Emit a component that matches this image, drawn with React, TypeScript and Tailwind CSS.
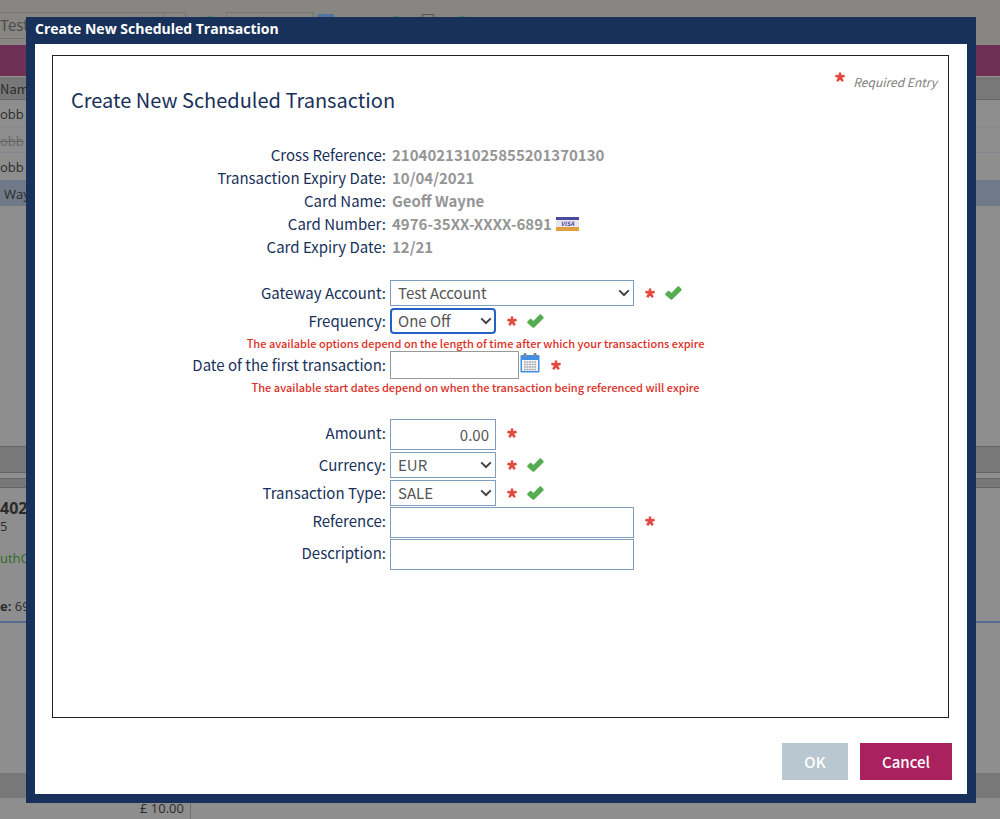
import { useState } from "react";
import type { ReactNode } from "react";
import clsx from "clsx";

const details = [
  { label: "Cross Reference:", value: "210402131025855201370130" },
  { label: "Transaction Expiry Date:", value: "10/04/2021" },
  { label: "Card Name:", value: "Geoff Wayne" },
  { label: "Card Number:", value: "4976-35XX-XXXX-6891", card: true },
  { label: "Card Expiry Date:", value: "12/21" },
];

function RequiredIcon() {
  return (
    <svg width="10" height="10" viewBox="0 0 10 10" stroke="#e2493f" strokeWidth="2.6" className="shrink-0" aria-label="Required">
      <path d="M5 5V0.5M5 5L0.4 3.7M5 5L9.6 3.7M5 5L2.2 9.2M5 5L7.8 9.2" />
    </svg>
  );
}

function ValidIcon() {
  return (
    <svg width="17" height="14" viewBox="0 0 17 14" fill="#55ad52" className="shrink-0" aria-label="Valid">
      <path d="M0.4 7.6L3 5Q3.7 4.5 4.4 5.1L6.4 7L12.6 0.6Q13.4 0 14.1 0.6L16.4 3Q17 3.7 16.4 4.4L7.2 13.4Q6.4 14 5.6 13.4L0.4 9Q-0.1 8.3 0.4 7.6Z" />
    </svg>
  );
}

function CalendarIcon() {
  return (
    <svg width="20" height="20" viewBox="0 0 20 20" fill="none">
      <rect x="0.5" y="2" width="19" height="17.5" rx="1" fill="#3f8fe6" />
      <rect x="2" y="7" width="16" height="11" fill="#f4f6f8" />
      <path d="M4 9H16M4 11.5H16M4 14H16M4 16.5H16" stroke="#a0a5aa" strokeWidth="1.6" strokeDasharray="1.8 0.75" />
      <rect x="3.5" y="0" width="3" height="4" rx="1" fill="#7b8894" />
      <rect x="13.5" y="0" width="3" height="4" rx="1" fill="#7b8894" />
    </svg>
  );
}

function VisaIcon() {
  return (
    <svg width="23" height="14" viewBox="0 0 23 14" aria-label="Visa">
      <rect width="23" height="14" fill="#e8e6ee" />
      <rect width="23" height="3" fill="#4a4b9c" />
      <rect y="10" width="23" height="4" fill="#dfa040" />
      <text x="11.5" y="9" textAnchor="middle" fontSize="6" fontWeight="700" fontStyle="italic" fill="#4a4b9c">VISA</text>
    </svg>
  );
}

type RowProps = {
  id: string;
  label: string;
  required?: boolean;
  valid?: boolean;
  extra?: ReactNode;
  children: ReactNode;
};

function Row({ id, label, required, valid, extra, children }: RowProps) {
  return (
    <div className="grid grid-cols-[337px_1fr] items-start">
      <label htmlFor={id} className="pr-1 text-right leading-[27px]">
        {label}
      </label>
      <div className="flex items-start">
        {children}
        {extra}
        <div className="ml-[11px] flex h-7 items-center gap-2.5">
          {required && <RequiredIcon />}
          {valid && <ValidIcon />}
        </div>
      </div>
    </div>
  );
}

type SelectProps = {
  id: string;
  options: string[];
  wide?: boolean;
  focused?: boolean;
};

function Select({ id, options, wide, focused }: SelectProps) {
  const [value, setValue] = useState(options[0]);

  return (
    <div className={clsx("relative my-px", wide ? "w-61" : "w-[106px]")}>
      <select
        id={id}
        value={value}
        onChange={(e) => setValue(e.target.value)}
        className={clsx(
          "block h-6.5 w-full appearance-none border bg-white pr-6 text-[#555] outline-none",
          focused ? "rounded border-2 border-[#2560c4] pl-1.5" : "border-[#7f9dbe] pl-[7px]"
        )}
      >
        {options.map((o) => (
          <option key={o}>{o}</option>
        ))}
      </select>
      <svg width="12" height="8" viewBox="0 0 12 8" fill="none" stroke="#444" strokeWidth="2" className="pointer-events-none absolute top-[9px] right-1">
        <path d="M1.2 1.4L6 6L10.8 1.4" />
      </svg>
    </div>
  );
}

function Note({ children }: { children: ReactNode }) {
  return <p className="pr-[50px] text-center text-[11px] leading-4 font-medium text-[#dc3027]">{children}</p>;
}

// Dimmed account page behind the dialog
function AccountPage() {
  return (
    <div className="flex min-h-screen flex-col overflow-hidden bg-[#8e8e8e] text-[13px] text-[#2b2b2b]">
      <div className="flex h-[45px] items-start bg-[#878683] pt-3">
        <div className="flex h-[27px] w-[186px] border border-l-0 border-[#747474] text-base leading-6 text-[#4c4c4c]">
          <span className="w-[165px] border-r border-[#747474] font-['Noto_Sans_CJK_JP',sans-serif] text-[15px]">Test</span>
        </div>
        <div className="mt-1 ml-4 h-4 w-4 rounded-full bg-[#4a8a4c]" />
        <div className="ml-2 h-[27px] w-[88px] border border-[#747474]" />
        <div className="mt-0.5 ml-1 h-4 w-4 bg-[#4e74a0]" />
        <div className="mt-1 ml-14 h-4 w-3 rounded-full bg-[#4a8a4c]" />
        <div className="mt-0.5 ml-5 h-4 w-3 border border-[#555]" />
        <div className="mt-1 ml-5 h-4 w-4 rounded-full bg-[#4a8a4c]" />
      </div>
      <div className="h-[31px] bg-[#6e3054]" />
      <div className="h-6 border-y border-t-[#929292] border-b-[#656565] bg-[#787878] font-['Noto_Sans_CJK_JP',sans-serif] leading-6">Name</div>
      <div className="h-[27px] border-b border-[#858892] leading-7">obb</div>
      <div className="h-[26px] border-b border-[#858892] leading-7 text-[#666] line-through">obb</div>
      <div className="h-[27px] leading-7">obb</div>
      <div className="h-[26px] bg-[#6f7988] pl-1 leading-7">Way</div>
      <div className="h-60" />
      <div className="h-[27px] border-y border-[#656565] bg-[#787878]" />
      <div className="h-[5px]" />
      <div className="h-2.5 border-y border-[#656565] bg-[#787878]" />
      <div className="h-[135px] border-b-2 border-[#526b92] pt-2.5">
        <div className="text-base leading-5 font-bold">402</div>
        <div className="leading-4">5</div>
        <div className="mt-3.5 leading-5 text-[#2f6a2a]">uthCode</div>
        <div className="mt-7 leading-5 whitespace-nowrap">
          <b>e:</b> 69
        </div>
      </div>
      <div className="h-[150px]" />
      <div className="h-[25px] border-y border-[#717780] bg-[#787878]" />
      <div className="w-[191px] grow border-r border-[#717171] pr-1.5 text-right leading-5">£ 10.00</div>
    </div>
  );
}

export default function App() {
  const [date, setDate] = useState("");
  const [amount, setAmount] = useState("0.00");
  const [reference, setReference] = useState("");
  const [description, setDescription] = useState("");

  return (
    <div className="relative font-['Open_Sans',sans-serif]">
      <AccountPage />

      <div className="absolute inset-0 flex flex-col pt-[17px] pr-6 pb-4 pl-[26px]">
        <div
          role="dialog"
          aria-labelledby="dialog-title"
          className="flex grow flex-col bg-[#18315a] px-[9px] pb-[9px] font-['Noto_Sans_CJK_JP',sans-serif] text-[15px] text-[#18315a]"
        >
          <h1 id="dialog-title" className="h-[27px] font-['Open_Sans',sans-serif] text-sm leading-6 font-bold text-white">
            Create New Scheduled Transaction
          </h1>

          <div className="flex grow flex-col bg-white pt-[11px] pr-[15px] pb-3.5 pl-[17px]">
            <form className="mr-[3px] grow border border-[#222]">
              <div className="flex h-[87px] items-start justify-between pr-[11px] pl-[18px]">
                <h2 className="pt-7 text-xl leading-8">Create New Scheduled Transaction</h2>
                <div className="flex items-start gap-2 pt-4 text-xs leading-5 text-[#808080] italic">
                  <RequiredIcon />
                  Required Entry
                </div>
              </div>

              <dl>
                {details.map((d) => (
                  <div key={d.label} className="grid grid-cols-[337px_1fr] leading-[23px]">
                    <dt className="pr-1 text-right">{d.label}</dt>
                    <dd className="flex items-center gap-1 pl-0.5 font-bold text-[#959595]">
                      {d.value}
                      {d.card && <VisaIcon />}
                    </dd>
                  </div>
                ))}
              </dl>

              <div className="mt-[21px]">
                <Row id="gateway" label="Gateway Account:" required valid>
                  <Select id="gateway" options={["Test Account"]} wide />
                </Row>
                <Row id="frequency" label="Frequency:" required valid>
                  <Select id="frequency" options={["One Off", "Weekly", "Monthly"]} focused />
                </Row>
                <Note>The available options depend on the length of time after which your transactions expire</Note>
                <Row
                  id="date"
                  label="Date of the first transaction:"
                  required
                  extra={
                    <button type="button" aria-label="Pick a date" className="ml-px pt-0.5">
                      <CalendarIcon />
                    </button>
                  }
                >
                  <input id="date" value={date} onChange={(e) => setDate(e.target.value)} className="h-7 w-[129px] border border-[#999] px-1.5 text-[#555]" />
                </Row>
                <Note>The available start dates depend on when the transaction being referenced will expire</Note>
              </div>

              <div className="mt-6">
                <Row id="amount" label="Amount:" required>
                  <input id="amount" value={amount} onChange={(e) => setAmount(e.target.value)} className="mb-px h-[31px] w-[106px] border border-[#7f9dbe] px-1.5 text-right text-[#555]" />
                </Row>
                <Row id="currency" label="Currency:" required valid>
                  <Select id="currency" options={["EUR", "GBP", "USD"]} />
                </Row>
                <Row id="type" label="Transaction Type:" required valid>
                  <Select id="type" options={["SALE", "REFUND"]} />
                </Row>
                <Row id="reference" label="Reference:" required>
                  <input id="reference" value={reference} onChange={(e) => setReference(e.target.value)} className="mb-px h-[31px] w-61 border border-[#7f9dbe] px-1.5 text-[#555]" />
                </Row>
                <Row id="description" label="Description:">
                  <input id="description" value={description} onChange={(e) => setDescription(e.target.value)} className="mb-px h-[31px] w-61 border border-[#7f9dbe] px-1.5 text-[#555]" />
                </Row>
              </div>
            </form>

            <div className="mt-[25px] flex justify-end gap-3 leading-5 text-white">
              <button type="button" className="h-[37px] w-[66px] bg-[#b8c7d0] font-medium">OK</button>
              <button type="button" className="h-[37px] w-[92px] bg-[#a9215e] font-medium">Cancel</button>
            </div>
          </div>
        </div>
      </div>
    </div>
  );
}
